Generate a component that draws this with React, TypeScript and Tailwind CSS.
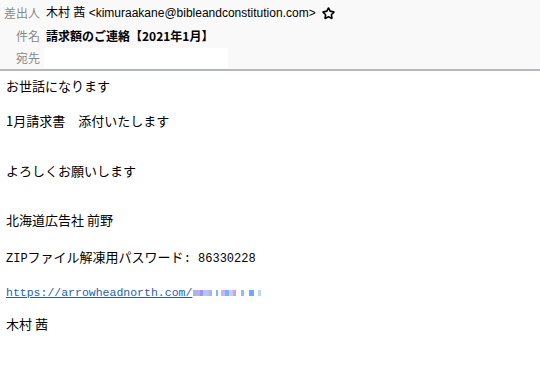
import React from "react";
import { Star } from "lucide-react";

const jp = { fontFamily: '"Noto Sans CJK JP", "Open Sans", sans-serif' };
const head = { fontFamily: '"Liberation Sans", "Noto Sans CJK JP", sans-serif' };
const mono = { fontFamily: '"Liberation Mono", "Noto Sans CJK JP", monospace' };

const Blur = () => {
    const blocks = [
        ["#9fb8f0", 3], ["#c4a9ea", 4], ["#8f9df0", 3], ["#d6b7f2", 3], ["#a6c9ff", 3],
        ["#c9a6ef", 3], ["#ffffff", 4], ["#7fb6ff", 2], ["#ffffff", 3], ["#c9b3f0", 4],
        ["#76b2ff", 4], ["#d9c5f5", 4], ["#b7a8f2", 3], ["#ffffff", 5], ["#8cbcff", 3],
        ["#ffffff", 5], ["#6fa8ff", 5], ["#ffffff", 4], ["#b8d8ff", 3],
    ] as const;
    return (
        <span className="inline-flex items-center h-[8px] ml-[1px] align-middle">
            {blocks.map(([c, w], i) => (
                <span key={i} className="inline-block h-[6px]" style={{ background: c, width: w }} />
            ))}
        </span>
    );
};

const App = () => {
    return (
        <div className="w-[540px] h-[375px] bg-white text-black overflow-hidden" style={jp}>
            <div className="bg-[#f9f9f9] border-b-2 border-[#b4b7c2] h-[71px] pt-[4px]">
                <div className="flex items-center h-[18px] text-[12px]">
                    <span className="w-[40px] text-right text-[#888]" style={jp}>差出人</span>
                    <span className="ml-[6px]" style={head}>木村 茜 &lt;kimuraakane@bibleandconstitution.com&gt;</span>
                    <Star className="ml-[6px]" size={13} strokeWidth={3} color="#000" />
                </div>
                <div className="flex items-center h-[18px] mt-[5px] text-[12px]">
                    <span className="w-[40px] text-right text-[#888]">件名</span>
                    <span className="ml-[6px] font-bold">請求額のご連絡【2021年1月】</span>
                </div>
                <div className="flex items-center h-[20px] mt-[3px] text-[12px]">
                    <span className="w-[40px] text-right text-[#888]">宛先</span>
                    <span className="ml-[4px] w-[184px] h-[20px] bg-white" />
                </div>
            </div>
            <div className="px-[6px] pt-[6px] text-[13px] leading-[18px]">
                <div>お世話になります</div>
                <div className="mt-[17px]">1月請求書　添付いたします</div>
                <div className="mt-[32px]">よろしくお願いします</div>
                <div className="mt-[31px]">北海道広告社 前野</div>
                <div className="mt-[19px] text-[12px]" style={mono}>
                    ZIP<span className="text-[13px]" style={jp}>ファイル解凍用パスワード</span>: 86330228
                </div>
                <div className="mt-[16px] text-[11.5px]" style={mono}>
                    <span className="text-[#2a5db0] underline">https://arrowheadnorth.com/</span>
                    <Blur />
                </div>
                <div className="mt-[13px]">木村 茜</div>
            </div>
        </div>
    );
};

export default App;
